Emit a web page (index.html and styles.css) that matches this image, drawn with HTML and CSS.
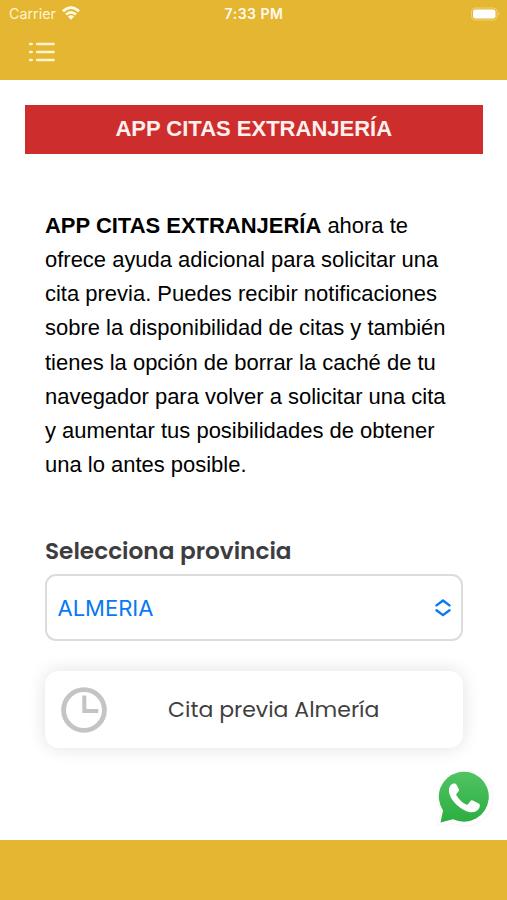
FILE: index.html
```html
<!DOCTYPE html>
<html lang="es">
<head>
<meta charset="utf-8">
<title>App Citas Extranjería</title>
<link rel="stylesheet" href="styles.css">
</head>
<body>
<div class="app">
  <header class="header">
    <div class="status">
      <div class="carrier">
        <span>Carrier</span>
        <svg class="wifi" viewBox="0 0 18 14" width="18" height="14">
          <g fill="none" stroke="#fffbe9" stroke-width="2.7">
            <path d="M1 5.200Q9-2 17 5.200"/>
            <path d="M4 8.600Q9 4.100 14 8.600"/>
          </g>
          <path fill="#fffbe9" d="M5.900 10.600Q9 8 12.100 10.600L9 13.700z"/>
        </svg>
      </div>
      <div class="time">7:33 PM</div>
      <svg class="battery" viewBox="0 0 30 14" width="30" height="14">
        <rect x="1.500" y="1" width="25.500" height="12" rx="3.500" fill="none" stroke="#efd17c"/>
        <rect x="3" y="2.500" width="22.500" height="9" rx="2.300" fill="#fff"/>
        <path d="M28.300 5Q30.300 7 28.300 9z" fill="#f1d68b"/>
      </svg>
    </div>
    <svg class="menu" viewBox="0 0 28 20" width="28" height="20">
      <g stroke="#fff4cd" stroke-width="2.300" stroke-linecap="round">
        <path d="M2 2h1.800M9 2h16.800M2 10h1.800M9 10h16.800M2 18h1.800M9 18h16.800"/>
      </g>
    </svg>
  </header>
  <main class="content">
    <h1 class="banner">APP CITAS EXTRANJERÍA</h1>
    <p class="intro"><b>APP CITAS EXTRANJERÍA</b> ahora te<br>ofrece ayuda adicional para solicitar una<br>cita previa. Puedes recibir notificaciones<br>sobre la disponibilidad de citas y también<br>tienes la opción de borrar la caché de tu<br>navegador para volver a solicitar una cita<br>y aumentar tus posibilidades de obtener<br>una lo antes posible.</p>
    <h2 class="label">Selecciona provincia</h2>
    <div class="select">
      <span class="value">ALMERIA</span>
      <svg viewBox="0 0 16 18" width="16" height="18" fill="none" stroke="#0878f5" stroke-width="2.400" stroke-linecap="round" stroke-linejoin="round">
        <path d="M1.500 6.400L8 1.500l6.500 4.900M1.500 11.200L8 16.100l6.500-4.900"/>
      </svg>
    </div>
    <div class="card">
      <svg class="clock" viewBox="0 0 46 46" width="46" height="46" fill="none" stroke="#c4c4c4">
        <circle cx="23" cy="23" r="20.400" stroke-width="4.800"/>
        <path d="M23.300 8.500v15.500h14" stroke-width="4"/>
      </svg>
      <span class="card-text">Cita previa Almería</span>
    </div>
    <svg class="whatsapp" viewBox="0 0 60 60" width="60" height="60">
      <defs>
        <linearGradient id="green" x1="0" y1="0" x2="0" y2="1"><stop offset="0" stop-color="#50c463"/><stop offset="1" stop-color="#2cae40"/></linearGradient>
      </defs>
      <path d="M3 56.500L7.500 43A27.500 27.500 0 1 1 20 54.500z" fill="#fff" stroke="#f6f6f6"/>
      <path d="M6.500 53.500L9 41.500A25 25 0 1 1 19 50.200z" fill="url(#green)"/>
      <path d="M24.300 17.300c-1-2.300-2-2.300-3-2.300-2.200 0-5.200 2.500-5.200 7 0 4.800 3.400 10.300 7.900 14.400 5 4.500 10.500 7.300 15.200 7.300 4.300 0 7.700-3.100 7.800-6.500.1-1.600-.3-1.900-1.600-2.500l-5.400-2.600c-1.100-.5-1.700-.3-2.400.6l-2.200 2.800c-.6.700-1.200.8-2 .4-3.800-1.600-7.300-5-9.700-8.900-.4-.8-.3-1.300.2-1.900l1.900-2.400c.5-.7.500-1.200.2-1.900z" transform="translate(-1.200 -.5)" fill="#fff"/>
    </svg>
  </main>
  <footer class="footer"></footer>
</div>
</body>
</html>
```
FILE: styles.css
```css
* { box-sizing: border-box; }
body { margin: 0; background: #fff; }
.app {
  position: relative;
  display: flex;
  flex-direction: column;
  width: 507px;
  height: 900px;
  overflow: hidden;
  font-family: "Liberation Sans", Arial, sans-serif;
}
.header { height: 80px; background: #e5b631; flex: none; }
.status {
  display: grid;
  grid-template-columns: 1fr auto 1fr;
  align-items: center;
  height: 27px;
  padding: 0 7px 0 9px;
  font: 14.300px/27px Inter, sans-serif;
  color: #fff4d0;
}
.carrier { display: flex; align-items: center; gap: 6px; }
.wifi { margin-top: -1px; }
.time { font-size: 14px; font-weight: 600; color: #fffaf0; letter-spacing: .5px; margin-left: -1px; }
.battery { justify-self: end; }
.menu { display: block; margin: 15px 0 0 28px; }
.content { flex: 1; padding: 25px 24.500px 0 25px; }
.banner {
  height: 48.500px;
  margin: 0;
  background: #cd2d2d;
  color: #fff0ed;
  font-size: 22px;
  line-height: 48px;
  text-align: center;
}
.intro {
  margin: 55px 0 0;
  padding-left: 20px;
  font-size: 21.970px;
  line-height: 34.280px;
  color: #000;
  white-space: nowrap;
}
.label {
  margin: 51px 0 0 20px;
  font: 600 23.200px/34px Poppins, Inter, sans-serif;
  color: #3d3d3f;
}
.select {
  display: flex;
  align-items: center;
  justify-content: space-between;
  height: 67px;
  margin: 6.400px 19.500px 0 20px;
  padding: 0 10px 0 10.500px;
  border: 2px solid #dcdcdc;
  border-radius: 11px;
  font: 22px/30px Inter, sans-serif;
  color: #0878f5;
}
.card {
  display: flex;
  align-items: center;
  height: 77px;
  margin: 30px 19.500px 0 20px;
  padding-left: 16px;
  border-radius: 14px;
  box-shadow: 0 0 18px rgba(0, 0, 0, .12);
}
.card-text {
  margin-left: 61px;
  font: 22px/34px Poppins, Inter, sans-serif;
  color: #3f3f41;
}
.whatsapp { position: absolute; right: 13px; bottom: 71px; }
.footer { height: 60px; background: #e5b631; flex: none; }
```
